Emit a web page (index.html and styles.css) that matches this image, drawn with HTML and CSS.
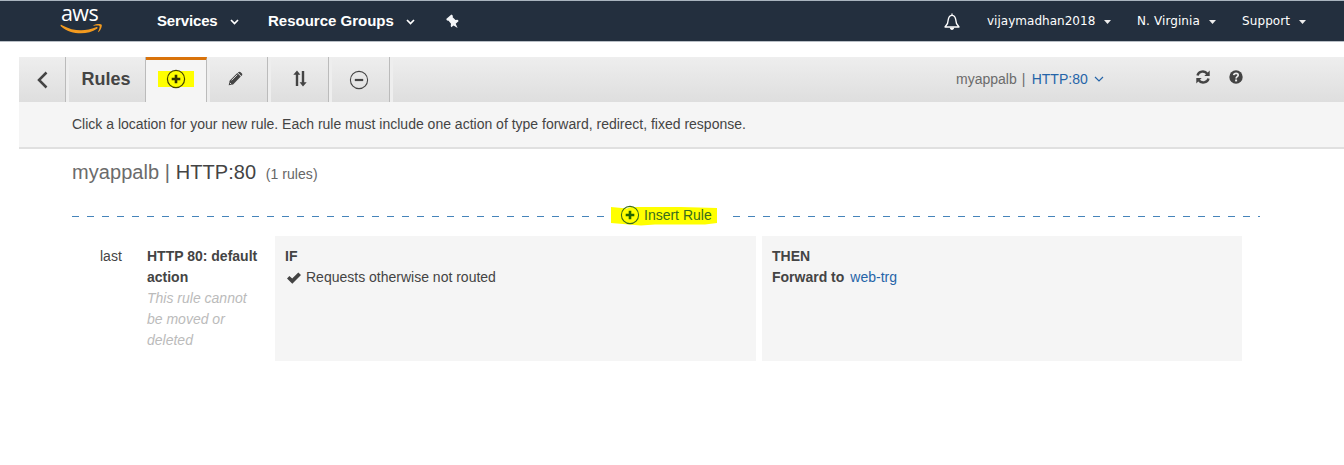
FILE: index.html
```html
<!DOCTYPE html>
<html lang="en">
<head>
<meta charset="utf-8">
<title>Rules</title>
<link rel="stylesheet" href="styles.css">
</head>
<body>
<header class="nav">
  <div class="logo">
    <span class="logo-text">aws</span>
    <svg class="logo-smile" width="43" height="11" viewBox="0 0 43 11"><path d="M.5 1.2C1 .4 1.700 .9 2.500 1.400C13 7.200 25 7.800 36 3.200C37.500 2.600 38.300 3.800 37 4.800C27 11.500 11 11 .8 2.200Z" fill="#f29a1f"/><path d="M33.500 1.300C36 -.2 41 -.2 41.700 .8C42.200 1.900 41 6 38.700 8.100C38 8.500 38 8 38.300 7.300C39.300 4.800 40 2.600 39.500 2C38.800 1.300 36 1.600 34 1.800C33.200 1.900 33.100 1.600 33.500 1.300Z" fill="#f29a1f"/></svg>
  </div>
  <div class="nav-main services"><span>Services</span><svg width="9" height="6" viewBox="0 0 9 6"><path d="M1 1l3.500 3.500L8 1" fill="none" stroke="#fff" stroke-width="1.700"/></svg></div>
  <div class="nav-main groups"><span>Resource Groups</span><svg width="9" height="6" viewBox="0 0 9 6"><path d="M1 1l3.500 3.500L8 1" fill="none" stroke="#fff" stroke-width="1.700"/></svg></div>
  <svg class="pin" width="14" height="15" viewBox="0 0 14 15"><path d="M5.400 .6L6.900 1.800L6.700 3.200L9.500 6L11.500 5.700L12.700 7L9.700 9.700L11.600 13.900L7.600 11.600L5.300 13.200L4.700 11.900L5 9.800L2.600 6.800L1 6.500L.2 5Z" fill="#f4f6f8"/></svg>
  <div class="nav-side">
    <svg class="bell" width="16" height="18" viewBox="0 0 16 18"><path d="M8 .5v2M1 14h14l-2.500-3.500L11.600 6C11 3.500 9.800 2.400 8 2.400S5 3.500 4.400 6L3.500 10.500Z" fill="none" stroke="#fff" stroke-width="1.300" stroke-linejoin="round"/><path d="M5.800 14.500h4.400c0 3.200-4.400 3.200-4.400 0" fill="#fff"/></svg>
    <div class="menu user"><span>vijaymadhan2018</span><svg width="7" height="4" viewBox="0 0 7 4"><path d="M0 0h7L3.500 4Z" fill="#eee"/></svg></div>
    <div class="menu region"><span>N. Virginia</span><svg width="7" height="4" viewBox="0 0 7 4"><path d="M0 0h7L3.500 4Z" fill="#eee"/></svg></div>
    <div class="menu support"><span>Support</span><svg width="7" height="4" viewBox="0 0 7 4"><path d="M0 0h7L3.500 4Z" fill="#eee"/></svg></div>
  </div>
</header>
<section class="panel">
  <div class="toolbar">
    <div class="tab back"><svg width="11" height="18" viewBox="0 0 11 18"><path d="M9.500 1.500L2 9l7.500 7.500" fill="none" stroke="#444" stroke-width="2.500"/></svg></div>
    <div class="tab title">Rules</div>
    <div class="tab active"><span class="mark"><svg width="20" height="20" viewBox="0 0 20 20"><circle cx="10" cy="10" r="8.600" fill="none" stroke="#444400" stroke-width="1.200"/><path d="M10 5.700v8.600M5.700 10h8.600" stroke="#333300" stroke-width="2.600"/></svg></span></div>
    <div class="tab edit"><svg width="15" height="15" viewBox="0 0 15 15"><path d="M.7 14.300L1.600 9.800L9.300 2.100L12.800 5.600L5.100 13.400Z M10.200 1.300C11 .5 11.900 .5 12.700 1.200L13.700 2.200C14.500 3 14.500 3.900 13.700 4.700L13.400 5L9.900 1.600Z" fill="#444"/><path d="M3.600 9.300L9.300 3.700M1.800 11.800l1.400 1.400" stroke="#e8e8e8" stroke-width=".9"/></svg></div>
    <div class="tab sort"><svg width="14" height="17" viewBox="0 0 14 17"><path d="M4 16V3M10 1v12" stroke="#444" stroke-width="2.400"/><path d="M.3 4.800L4 .4l3.400 4.400ZM6.600 12.200L10 16.600l3.700-4.400Z" fill="#444"/></svg></div>
    <div class="tab remove"><svg width="20" height="20" viewBox="0 0 20 20"><circle cx="10" cy="10" r="8.600" fill="none" stroke="#444" stroke-width="1.100"/><path d="M5.800 10h8.400" stroke="#444" stroke-width="2.200"/></svg></div>
    <div class="target"><span class="muted">myappalb</span><span class="muted bar">|</span><a>HTTP:80</a><svg width="10" height="6" viewBox="0 0 10 6"><path d="M1 1l4 4 4-4" fill="none" stroke="#2564a8" stroke-width="1.200"/></svg></div>
    <svg class="refresh" width="14" height="14" viewBox="0 0 14 14"><path d="M1.500 5.600C2.500 1 8.700 .1 11.200 3.700M12.500 8.400C11.500 13 5.300 13.900 2.800 10.300" fill="none" stroke="#444" stroke-width="2.400"/><path d="M13.700 .6v5.400H8.300ZM.3 13.400v-5.400h5.400Z" fill="#444"/></svg>
    <svg class="help" width="14" height="14" viewBox="0 0 14 14"><circle cx="7" cy="7" r="6.700" fill="#444"/><path d="M4.700 5.200C5 2.600 9.300 2.700 9.200 5.100C9.200 6.700 7.100 6.700 7.100 8.500" fill="none" stroke="#eee" stroke-width="1.700"/><path d="M6.100 9.500h2v1.900h-2z" fill="#eee"/></svg>
  </div>
  <p class="hint">Click a location for your new rule. Each rule must include one action of type forward, redirect, fixed response.</p>
</section>
<main class="content">
  <h1><span class="muted">myappalb |</span> HTTP:80 <small>(1 rules)</small></h1>
  <div class="insert">
    <span class="dash left"></span>
    <div class="insert-btn">
      <svg class="stroke" width="108" height="20" viewBox="0 0 108 20"><path d="M0 1L16 2.500L20 1H70L106 2V17L94 18.500H44L30 19.500L0 17Z" fill="#ff0"/></svg>
      <svg class="plus" width="20" height="20" viewBox="0 0 20 20"><circle cx="10" cy="10" r="8.600" fill="none" stroke="#386c1d" stroke-width="1.100"/><path d="M10 5.700v8.600M5.700 10h8.600" stroke="#246500" stroke-width="2.600"/></svg>
      <span class="label">Insert Rule</span>
    </div>
    <span class="dash right"></span>
  </div>
  <div class="rule">
    <div class="order">last</div>
    <div class="name"><b>HTTP 80: default action</b><i>This rule cannot be moved or deleted</i></div>
    <div class="card"><b>IF</b><div class="cond"><svg width="14" height="12" viewBox="0 0 14 12"><path d="M0 6.500L2.400 4.100L5.200 6.600L11.300 .5L14 3.100L5.300 11.700Z" fill="#444"/></svg><span>Requests otherwise not routed</span></div></div>
    <div class="card then"><b>THEN</b><div><b>Forward to</b><a>web-trg</a></div></div>
  </div>
</main>
</body>
</html>
```
FILE: styles.css
```css
* { box-sizing: border-box; }
body { margin: 0; background: #fff; color: #444; font: 14px/21px "Liberation Sans", Arial, sans-serif; overflow: hidden; }
svg { display: block; flex: none; }
a { color: #2564a8; }

.nav { height: 42px; display: flex; background: #232f3e; border-top: 1px solid #a9b4be; border-bottom: 1px solid #b9bfc6; color: #fff; }
.logo { width: 43px; margin-left: 60px; padding-top: 1px; }
.logo-text { display: block; height: 22px; font: 500 21.5px/22px "Open Sans", sans-serif; padding-left: 1px; letter-spacing: -0.6px; }
.nav-main { display: flex; font-size: 15px; font-weight: 700; line-height: 40px; }
.nav-main svg { margin-top: 18px; }
.services { width: 111px; margin-left: 54px; }
.services span { width: 73px; letter-spacing: -0.15px; }
.groups span { width: 138px; letter-spacing: 0; }
.pin { margin: 13px 0 0 31px; }
.nav-side { display: flex; margin-left: auto; font: 12px/41px "DejaVu Sans", Verdana, sans-serif; }
.bell { margin: 12px 27px 0 0; }
.menu { display: flex; }
.menu svg { margin-top: 19px; }
.user { width: 150px; }
.user span { width: 117px; letter-spacing: 0.02px; }
.region { width: 105px; }
.region span { width: 72px; letter-spacing: 0.1px; }
.support { width: 102px; }
.support span { width: 57px; letter-spacing: 0.1px; }

.panel { margin: 15px 0 0 19px; background: #f5f5f5; border-bottom: 2px solid #e0e0e0; height: 92px; }
.toolbar { display: flex; height: 45px; background: linear-gradient(#eeeeee, #dedede); }
.tab { display: flex; justify-content: center; align-items: center; border-right: 1px solid #bbb; box-shadow: 3px 0 0 #eeeeee; }
.back { width: 47px; }
.title { width: 80px; font-size: 18px; font-weight: 700; padding-left: 1px; letter-spacing: 0; }
.active { width: 61px; background: #f5f5f5; border-top: 3px solid #d9730b; z-index: 1; }
.mark { width: 36px; height: 16px; margin: -4px 0 0 0; background: #ff0; display: flex; justify-content: center; align-items: center; }
.edit { width: 61px; padding: 0 4px 2px 0; }
.sort { width: 61px; padding: 0 0 2px 4px; }
.remove { width: 61px; }
.target { display: flex; width: 247px; margin-left: 566px; line-height: 44px; }
.target .bar { width: 15px; padding-left: 5px; }
.target svg { margin: 19px 0 0 6px; }
.muted { color: #6b6b6b; }
.refresh { margin: 13px 19px 0 -7px; }
.help { margin-top: 13px; }
.hint { margin: 0; padding: 12px 0 0 53px; }

.content { padding: 11px 0 0 72px; }
h1 { margin: 0; font-size: 20px; font-weight: 400; line-height: 24px; height: 24px; letter-spacing: 0.06px; }
h1 small { font-size: 14px; color: #666; margin-left: 4px; }
.insert { display: flex; height: 20px; margin-top: 22px; width: 1188px; }
.dash { height: 1px; margin-top: 10px; background: repeating-linear-gradient(90deg, #4684ba 0 7px, transparent 7px 15px); }
.left { width: 534px; }
.right { width: 527px; margin-left: 16px; }
.insert-btn { position: relative; display: flex; width: 106px; margin-left: 5px; color: #386c1d; }
.insert-btn .stroke { position: absolute; left: 0; top: 0; }
.insert-btn .plus { position: relative; margin: -1px 4px 0 9px; }
.insert-btn .label { position: relative; line-height: 18px; white-space: nowrap; }
.rule { display: flex; margin-top: 10px; height: 125px; }
.order { width: 75px; padding: 10px 0 0 28px; }
.name { width: 128px; padding: 10px 16px 0 0; }
.name b, .name i { display: block; }
.name i { color: #bbb; padding-right: 5px; }
.card { width: 481px; padding: 10px; background: #f5f5f5; }
.card > b { display: block; }
.cond { display: flex; gap: 5px; }
.cond svg { margin: 5px 0 0 2px; }
.then { width: 480px; margin-left: 6px; }
.then a { margin-left: 6px; }
```
